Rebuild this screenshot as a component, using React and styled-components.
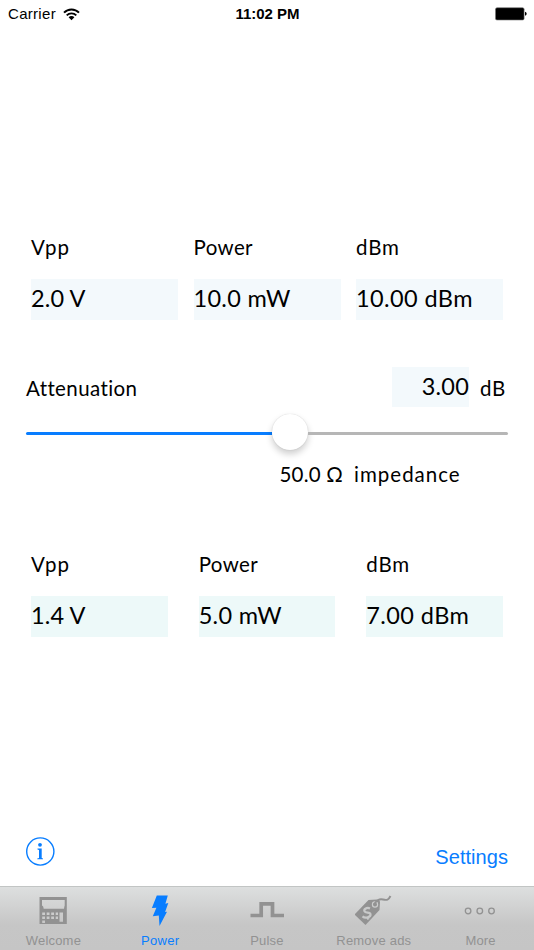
import React from 'react'
import styled, { createGlobalStyle } from 'styled-components'

const GlobalStyle = createGlobalStyle`
  * {
    box-sizing: border-box;
  }
  body {
    margin: 0;
    background: #fff;
  }
`

const Screen = styled.div`
  display: flex;
  flex-direction: column;
  width: 534px;
  height: 950px;
  overflow: hidden;
  background: #fff;
  color: #000;
  font-family: Lato, sans-serif;
`

const StatusBar = styled.header`
  display: grid;
  grid-template-columns: 1fr auto 1fr;
  align-items: center;
  height: 28px;
  padding: 0 7px 0 8px;
  font: 15px/28px 'Liberation Sans', sans-serif;

  svg {
    display: block;
  }
`

const Carrier = styled.div`
  display: flex;
  align-items: center;
  gap: 7px;
  letter-spacing: 0.3px;
`

const Clock = styled.div`
  font-weight: bold;
  letter-spacing: -0.05px;
`

const Battery = styled.svg`
  justify-self: end;
`

const Fields = styled.section`
  display: grid;
  grid-template-columns: repeat(3, 1fr);
  column-gap: ${props => props.$gap}px;
  margin-top: ${props => props.$top}px;
  padding: 0 31px;
`

const Label = styled.div`
  height: 45px;
  font-size: 20.5px;
  line-height: 26px;
  white-space: pre;
  letter-spacing: ${props => props.$spacing || 0}px;
`

const Value = styled.div`
  height: 41px;
  font-size: 23.5px;
  line-height: 38px;
  white-space: pre;
  text-align: ${props => props.$align || 'left'};
  letter-spacing: ${props => props.$spacing || 0}px;
  background: ${props => props.$tint || '#f3f9fc'};
`

const Attenuation = styled.section`
  display: grid;
  grid-template-columns: 1fr 77px 38px;
  height: 44px;
  margin-top: 47px;
  padding: 0 27px 0 26px;

  ${Label} {
    line-height: 42px;
  }
  ${Label}:last-child {
    padding-left: 11px;
  }
  ${Value} {
    height: 40px;
  }
`

const Slider = styled.div`
  display: flex;
  align-items: center;
  height: 36px;
  margin: 3px 26px 0;
`

const Track = styled.div`
  flex: ${props => (props.$filled ? '0 0 245.5px' : '1')};
  height: 3px;
  margin-top: 2px;
  border-radius: ${props => (props.$filled ? '2px 0 0 2px' : '0 2px 2px 0')};
  background: ${props => (props.$filled ? '#087dff' : '#b6b6b6')};
`

const Thumb = styled.div`
  flex: 0 0 36px;
  height: 36px;
  border-radius: 50%;
  background: #fff;
  box-shadow: 0 0 1px rgba(0, 0, 0, 0.2), 0 4px 7px rgba(0, 0, 0, 0.2);
`

const Impedance = styled.div`
  display: flex;
  gap: 11px;
  height: 26px;
  margin-top: 11px;
  padding-left: 279.5px;
`

const Footer = styled.footer`
  display: flex;
  justify-content: space-between;
  align-items: flex-start;
  height: 49px;
  margin-top: auto;
  padding: 0 26px;
  color: #087dff;
`

const Settings = styled.a`
  margin-top: 8px;
  font: 20px/24px 'Liberation Sans', sans-serif;
  letter-spacing: 0.05px;
`

const TabBar = styled.nav`
  display: grid;
  grid-template-columns: repeat(5, 1fr);
  height: 64px;
  border-top: 1px solid #c2c5c4;
  background: linear-gradient(#dddfdf, #c6c6c6 60%, #c5c5c5);
`

const Tab = styled.a`
  display: flex;
  flex-direction: column;
  align-items: center;
  color: ${props => (props.$active ? '#087dff' : '#929292')};
  font: 13px/16px 'Liberation Sans', sans-serif;
  letter-spacing: ${props => props.$spacing || 0}px;
  white-space: nowrap;

  svg {
    display: block;
    margin: 4px 0;
  }
`

const input = [
  { label: 'Vpp', value: '2.0 V', spacing: 1.2, valueSpacing: 0.1 },
  { label: 'Power', value: '10.0 mW', spacing: 0.4, valueSpacing: 0.3 },
  { label: 'dBm', value: '10.00 dBm', spacing: 0.8, valueSpacing: 0.4 },
]

const output = [
  { label: 'Vpp', value: '1.4 V', spacing: 1.2, valueSpacing: 0.1 },
  { label: 'Power', value: '5.0 mW', spacing: 0.4, valueSpacing: 0.3 },
  { label: 'dBm', value: '7.00 dBm', spacing: 0.8, valueSpacing: 0.4 },
]

const CalculatorIcon = () => (
  <svg width="36" height="38" viewBox="0 0 36 38">
    <path
      fill="currentColor"
      fillRule="evenodd"
      d="M4.500 6h27.300v27H4.500zM7 9v5.500q1.500.5 1.700 3.200H29q.3-2.500.7-3.200V9zM7.200 21.500v2.500h2.800v-2.500zm4.500 0v2.500h2.800v-2.500zm4.500 0v2.500H19v-2.500zm4.500 0v2.500h2.300v-2.500zM7.200 25.500V28h2.800v-2.500zm4.500 0V28h2.800v-2.500zm4.500 0V28H19v-2.500zm4.500 0V28h2.300v-2.500zM7.200 29.500V32h2.800v-2.500zM24.500 21.500v9.300H28v-9.300z"
    />
  </svg>
)

const BoltIcon = () => (
  <svg width="36" height="38" viewBox="0 0 36 38">
    <path
      fill="currentColor"
      d="M14.800 4.500h11l-2.400 8.200 2.900-.6-3.200 9 1.900-.3L17.500 35l-.7-10.500-6 .8 3.600-8.500-4.500.3z"
    />
  </svg>
)

const PulseIcon = () => (
  <svg width="36" height="38" viewBox="0 0 36 38">
    <path fill="none" stroke="currentColor" strokeWidth="3.700" d="M1.500 24.500h10.700V12.800h11.300v11.700H35" />
  </svg>
)

const TagIcon = () => (
  <svg width="38" height="38" viewBox="2 0 38 38">
    <path
      fill="currentColor"
      d="M1.500 23.500L15.500 9l8.500-.5q3 0 3 3l-.5 7.500L12.500 34z"
    />
    <circle cx="22" cy="13.500" r="2.600" fill="none" stroke="#cbcccc" strokeWidth="1.200" />
    <path
      fill="none"
      stroke="currentColor"
      strokeWidth="1.900"
      d="M21 13.500c3-4.500 5-5.800 9-5s5.500.5 7.500-3.500"
    />
    <path
      fill="none"
      stroke="#c8c9c9"
      strokeWidth="2.200"
      d="M17 17.500c-3-1.500-6.500.5-5.500 2.800 1 2.200 5.500.3 6 2.800.5 2.800-5 4.800-8 2.200M12.500 16.500l1 2M14.500 26.500l1 2"
    />
  </svg>
)

const MoreIcon = () => (
  <svg width="36" height="38" viewBox="0.7 0 36 38">
    <g fill="none" stroke="currentColor" strokeWidth="1.300">
      <circle cx="5.800" cy="20" r="2.800" />
      <circle cx="17.500" cy="20" r="2.800" />
      <circle cx="29.200" cy="20" r="2.800" />
    </g>
  </svg>
)

const tabs = [
  { name: 'Welcome', icon: CalculatorIcon, spacing: 0.2 },
  { name: 'Power', icon: BoltIcon, spacing: 0.3, active: true },
  { name: 'Pulse', icon: PulseIcon, spacing: 0.2 },
  { name: 'Remove ads', icon: TagIcon, spacing: 0.2 },
  { name: 'More', icon: MoreIcon, spacing: 0.2 },
]

const FieldGroup = ({ items, gap, top, tint }) => (
  <Fields $gap={gap} $top={top}>
    {items.map(item => (
      <div key={item.label}>
        <Label $spacing={item.spacing}>{item.label}</Label>
        <Value $tint={tint} $spacing={item.valueSpacing}>{item.value}</Value>
      </div>
    ))}
  </Fields>
)

const App = () => (
  <>
    <GlobalStyle />
    <Screen>
      <StatusBar>
        <Carrier>
          Carrier
          <svg width="17" height="13" viewBox="0 0 17 13">
            <g fill="none" stroke="#000" strokeWidth="1.900">
              <path d="M1 4.700C5 .4 12 .4 16 4.700" />
              <path d="M3.700 7.400c2.600-2.700 7-2.700 9.600 0" />
            </g>
            <path d="M5.600 9.300c1.600-1.600 4.200-1.600 5.800 0L8.500 12.300z" />
          </svg>
        </Carrier>
        <Clock>11:02 PM</Clock>
        <Battery width="32" height="14" viewBox="0 0 32 14">
          <rect x=".5" y=".7" width="28.600" height="12.300" rx="1.500" fill="#000" stroke="#777" strokeWidth=".6" />
          <path d="M30 4.800q1.700.3 1.700 2t-1.700 2z" />
        </Battery>
      </StatusBar>

      <FieldGroup items={input} gap={15.5} top={206} />

      <Attenuation>
        <Label $spacing={0.4}>Attenuation</Label>
        <Value $align="right" $spacing={0.2}>3.00</Value>
        <Label $spacing={0.6}>dB</Label>
      </Attenuation>
      <Slider>
        <Track $filled />
        <Thumb />
        <Track />
      </Slider>
      <Impedance>
        <Label $spacing={0.2}>50.0 Ω</Label>
        <Label $spacing={1}>impedance</Label>
      </Impedance>

      <FieldGroup items={output} gap={31} top={64} tint="#edf9f9" />

      <Footer>
        <svg width="29" height="29" viewBox="0 0 29 29">
          <circle cx="14.300" cy="14.500" r="13.600" fill="none" stroke="currentColor" strokeWidth="1.400" />
          <circle cx="14" cy="7.800" r="1.900" fill="currentColor" />
          <path fill="currentColor" d="M11.500 11.500h4.200v9.500l1.300.4v.9h-5.700v-.9l1.700-.4v-8l-1.500-.5z" />
        </svg>
        <Settings>Settings</Settings>
      </Footer>
      <TabBar>
        {tabs.map(({ name, icon: Icon, spacing, active }) => (
          <Tab key={name} $active={active} $spacing={spacing}>
            <Icon />
            {name}
          </Tab>
        ))}
      </TabBar>
    </Screen>
  </>
)

export default App
